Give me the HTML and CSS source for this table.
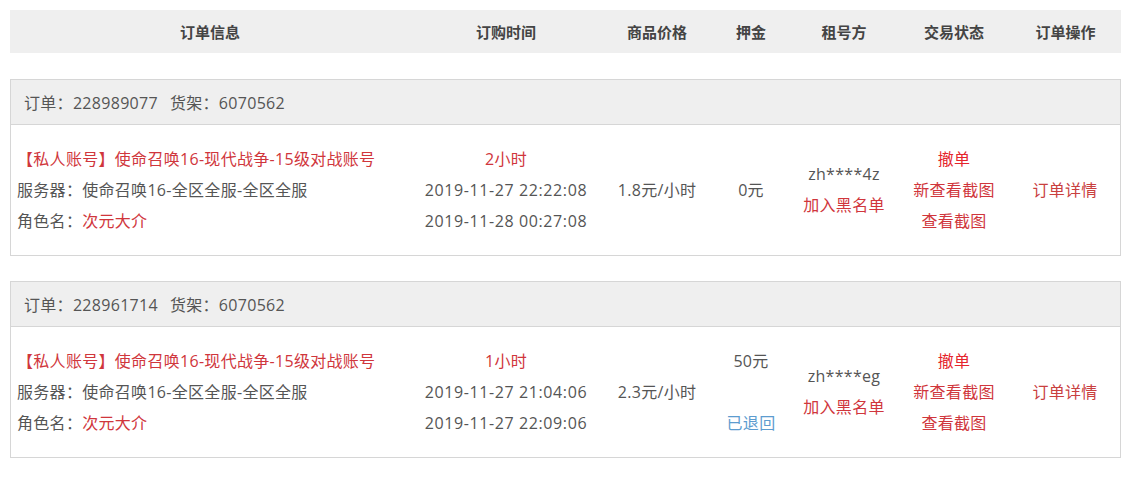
FILE: index.html
```html
<!DOCTYPE html>
<html lang="zh-CN">
<head>
<meta charset="utf-8">
<title>订单</title>
<link rel="stylesheet" href="styles.css">
</head>
<body>
<div class="page">
  <div class="thead">
    <div class="th">订单信息</div>
    <div class="th">订购时间</div>
    <div class="th">商品价格</div>
    <div class="th">押金</div>
    <div class="th">租号方</div>
    <div class="th">交易状态</div>
    <div class="th">订单操作</div>
  </div>

  <div class="orders">
  <div class="order">
    <div class="order-head"><span class="oid">订单：228989077</span><span>货架：6070562</span></div>
    <div class="order-body">
      <div class="cell info">
        <div class="red">【私人账号】使命召唤16-现代战争-15级对战账号</div>
        <div>服务器：使命召唤16-全区全服-全区全服</div>
        <div>角色名：<span class="red">次元大介</span></div>
      </div>
      <div class="cell center">
        <div class="red">2小时</div>
        <div class="date">2019-11-27 22:22:08</div>
        <div class="date">2019-11-28 00:27:08</div>
      </div>
      <div class="cell center">1.8元/小时</div>
      <div class="cell center">0元</div>
      <div class="cell center">
        <div>zh****4z</div>
        <div class="red">加入黑名单</div>
      </div>
      <div class="cell center">
        <div class="bright">撤单</div>
        <div class="red">新查看截图</div>
        <div class="red">查看截图</div>
      </div>
      <div class="cell center"><span class="red2">订单详情</span></div>
    </div>
  </div>

  <div class="order">
    <div class="order-head"><span class="oid">订单：228961714</span><span>货架：6070562</span></div>
    <div class="order-body">
      <div class="cell info">
        <div class="red">【私人账号】使命召唤16-现代战争-15级对战账号</div>
        <div>服务器：使命召唤16-全区全服-全区全服</div>
        <div>角色名：<span class="red">次元大介</span></div>
      </div>
      <div class="cell center">
        <div class="red">1小时</div>
        <div class="date">2019-11-27 21:04:06</div>
        <div class="date">2019-11-27 22:09:06</div>
      </div>
      <div class="cell center">2.3元/小时</div>
      <div class="cell center">
        <div>50元</div>
        <div class="blank">&nbsp;</div>
        <div class="blue">已退回</div>
      </div>
      <div class="cell center">
        <div>zh****eg</div>
        <div class="red">加入黑名单</div>
      </div>
      <div class="cell center">
        <div class="bright">撤单</div>
        <div class="red">新查看截图</div>
        <div class="red">查看截图</div>
      </div>
      <div class="cell center"><span class="red2">订单详情</span></div>
    </div>
  </div>
  </div>
</div>
</body>
</html>
```

FILE: styles.css
```css
* { box-sizing: border-box; }
body {
  margin: 0;
  background: #fff;
  font-family: "Open Sans", "Noto Sans CJK SC", "Noto Sans", sans-serif;
  color: #555;
}
.page {
  width: 1111px;
  margin: 10px 0 0 10px;
}
.thead {
  display: grid;
  grid-template-columns: 400px 192px 110px 78px 108px 112px 111px;
  height: 43px;
  background: #efefef;
  align-items: center;
}
.th {
  text-align: center;
  font-size: 15px;
  font-weight: bold;
  color: #444;
}
.orders {
  display: flex;
  flex-direction: column;
  gap: 25px;
  margin-top: 26px;
}
.order {
  border: 1px solid #d6d6d6;
}
.order-head {
  height: 45px;
  background: #efefef;
  border-bottom: 1px solid #d6d6d6;
  display: flex;
  align-items: center;
  padding-left: 13px;
  font-size: 16px;
  letter-spacing: 0.3px;
  color: #555;
}
.oid { margin-right: 12px; }
.order-body {
  display: grid;
  grid-template-columns: 399px 192px 110px 78px 108px 112px 110px;
  height: 130px;
  font-size: 16px;
  line-height: 31px;
  letter-spacing: 0.3px;
}
.cell {
  display: flex;
  flex-direction: column;
  justify-content: center;
}
.info { padding-left: 6px; }
.center { align-items: center; text-align: center; }
.date { letter-spacing: 0.6px; }
.red { color: #d0363c; }
.red2 { color: #c9403f; }
.bright { color: #e5242c; }
.blue { color: #5d9ccf; }
```
